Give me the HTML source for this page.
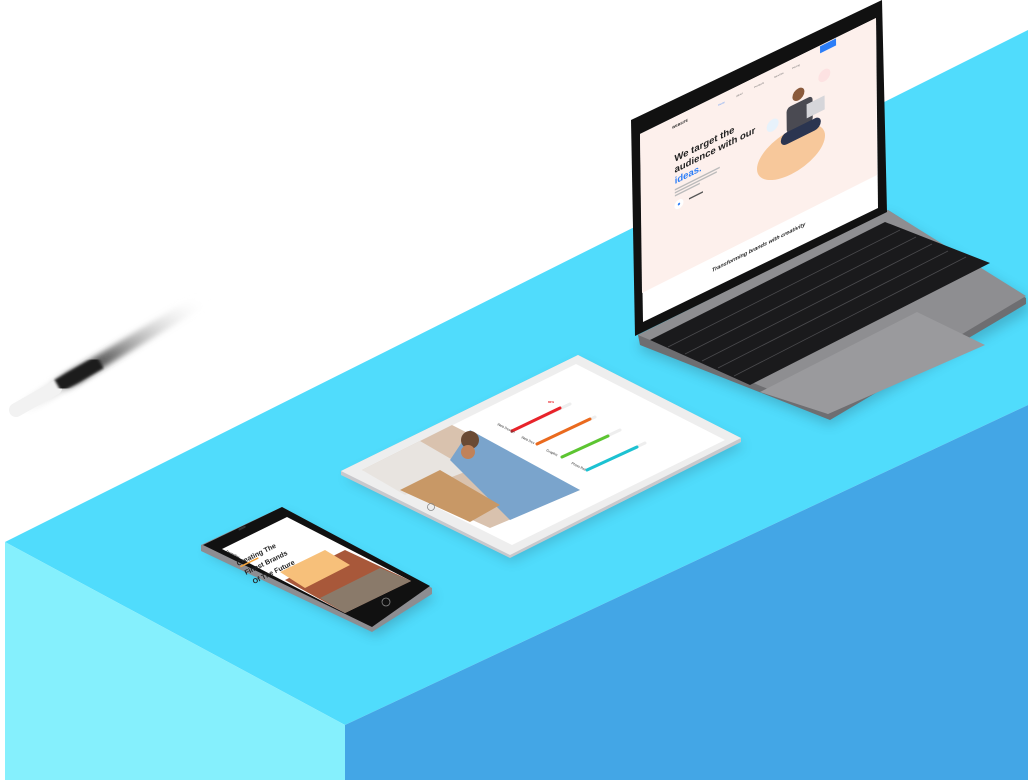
<!DOCTYPE html>
<html><head><meta charset="utf-8"><style>
html,body{margin:0;padding:0;background:#fff;width:1028px;height:780px;overflow:hidden}
svg{display:block}
text{font-family:"Liberation Sans",sans-serif}
</style></head><body>
<svg width="1028" height="780" viewBox="0 0 1028 780" xmlns="http://www.w3.org/2000/svg">
<defs>
<filter id="blur4"><feGaussianBlur stdDeviation="3"/></filter>
<filter id="blur2"><feGaussianBlur stdDeviation="1.2"/></filter>
<filter id="sh"><feGaussianBlur stdDeviation="6"/></filter>
<linearGradient id="pen" x1="0" y1="1" x2="1" y2="0">
<stop offset="0" stop-color="#fff"/><stop offset="0.2" stop-color="#ddd"/><stop offset="0.28" stop-color="#111"/><stop offset="0.5" stop-color="#444" stop-opacity="0.7"/><stop offset="1" stop-color="#fff" stop-opacity="0"/></linearGradient>
</defs>
<!-- block -->
<polygon points="5,542 1028,30 1028,405 345,725" fill="#50dcfc"/>
<polygon points="5,542 345,725 345,780 5,780" fill="#85f0fd"/>
<polygon points="345,725 1028,405 1028,780 345,780" fill="#43a6e6"/>
<!-- pen -->
<g filter="url(#blur4)"><line x1="20" y1="410" x2="205" y2="298" stroke="url(#pen)" stroke-width="14" stroke-linecap="round"/></g>
<line x1="16" y1="410" x2="55" y2="388" stroke="#f2f2f2" stroke-width="14" stroke-linecap="round"/>
<line x1="58" y1="386" x2="100" y2="362" stroke="#1a1a1a" stroke-width="14" filter="url(#blur2)"/>

<!-- laptop -->
<polygon points="640,340 888,214 1028,300 1028,312 830,425 640,350" fill="#1f3b4a" opacity="0.25" filter="url(#sh)"/>
<polygon points="638,335 888,210 1026,298 1026,304 830,420 640,345" fill="#6e6e71"/>
<polygon points="638,335 888,210 1026,296 828,414" fill="#8e8e91"/>
<polygon points="650,340 885,222 990,263 750,385" fill="#1a1a1c"/>
<g stroke="#4a4a4d" stroke-width="0.8">
<line x1="668" y1="347" x2="900" y2="230"/><line x1="685" y1="354" x2="916" y2="237"/><line x1="702" y1="361" x2="932" y2="244"/><line x1="718" y1="368" x2="948" y2="251"/><line x1="734" y1="376" x2="966" y2="257"/>
</g>
<polygon points="760,392 917,312 985,345 828,414" fill="#9a9a9d"/>
<polygon points="631,120 882,0 887,212 635,336" fill="#111"/>
<polygon points="640,134 876,18 878,208 643,322" fill="#fff"/>
<polygon points="640,134 876,18 877,175 642,293" fill="#fdf0ec"/>
<g transform="matrix(1,-0.498,0.011,1,640,135)">
<text x="32" y="10" font-size="3.5" font-weight="bold" fill="#222">WEBSITE</text>
<rect x="180" y="1" width="16" height="7" fill="#2c7ef8"/>
<text x="78" y="10" font-size="2.5" fill="#4a8cf5">Home</text>
<text x="96" y="10" font-size="2.5" fill="#666">About</text>
<text x="114" y="10" font-size="2.5" fill="#666">Products</text>
<text x="134" y="10" font-size="2.5" fill="#666">Services</text>
<text x="152" y="10" font-size="2.5" fill="#666">Pricing</text>
<text x="34" y="44" font-size="9.5" font-weight="bold" fill="#222">We target the</text>
<text x="34" y="55" font-size="9.5" font-weight="bold" fill="#222">audience with our</text>
<text x="34" y="66" font-size="9.5" font-weight="bold" fill="#2c7ef8">ideas.</text>
<rect x="34" y="71" width="45" height="1.5" fill="#bbb"/><rect x="34" y="74" width="42" height="1.5" fill="#bbb"/><rect x="34" y="77" width="25" height="1.5" fill="#bbb"/>
<circle cx="38" cy="88" r="4.5" fill="#fff"/><circle cx="38" cy="88" r="1.2" fill="#2c7ef8"/>
<rect x="48" y="87" width="14" height="1.5" fill="#555"/>
<ellipse cx="150" cy="92" rx="34" ry="22" fill="#f7c89b"/>
<circle cx="158" cy="38" r="6" fill="#8a5a3c"/>
<rect x="146" y="46" width="26" height="26" rx="4" fill="#4a4a52"/>
<rect x="140" y="70" width="40" height="12" rx="6" fill="#2b3550"/>
<rect x="166" y="52" width="18" height="14" fill="#d6d6da"/>
<circle cx="132" cy="56" r="6" fill="#e7f2fb"/><circle cx="184" cy="32" r="6" fill="#fde2e2"/>
<text x="70" y="172" font-size="5.5" font-style="italic" font-weight="bold" fill="#222">Transforming brands with creativity</text>
</g>

<!-- tablet -->
<polygon points="345,478 580,362 745,446 512,562" fill="#1f3b4a" opacity="0.2" filter="url(#sh)"/>
<polygon points="341,471 578,355 741,438 741,442 510,558 341,475" fill="#c8c8cc"/>
<polygon points="341,471 578,355 741,438 510,555" fill="#eeeeee"/>
<polygon points="362,470 576,364 725,440 512,545" fill="#fff"/>
<polygon points="362,470 452,425 580,490 490,528" fill="#d9c2ae"/>
<polygon points="362,470 420,441 470,470 405,495" fill="#e8e4e0"/>
<polygon points="450,460 470,430 580,490 510,520" fill="#7aa4cc"/>
<circle cx="470" cy="440" r="9" fill="#6a4a34"/><circle cx="468" cy="452" r="7" fill="#c0825a"/>
<polygon points="400,490 440,470 500,505 470,522" fill="#c89866"/>
<g stroke-width="3" stroke-linecap="round">
<line x1="512" y1="431" x2="570" y2="404" stroke="#eee"/><line x1="512" y1="431" x2="560" y2="408" stroke="#e8232a"/>
<line x1="537" y1="444" x2="595" y2="417" stroke="#eee"/><line x1="537" y1="444" x2="590" y2="419" stroke="#ea6a1e"/>
<line x1="562" y1="457" x2="620" y2="430" stroke="#eee"/><line x1="562" y1="457" x2="608" y2="436" stroke="#5cc531"/>
<line x1="587" y1="470" x2="645" y2="443" stroke="#eee"/><line x1="587" y1="470" x2="637" y2="447" stroke="#1cc2d2"/>
</g>
<g font-size="3.5" fill="#333">
<text transform="translate(497,425) rotate(26)">Web Design</text>
<text transform="translate(521,438) rotate(26)">Web Dev</text>
<text transform="translate(546,451) rotate(26)">Graphic</text>
<text transform="translate(571,464) rotate(26)">Photo Ret.</text>
</g>
<g font-size="3" fill="#e8232a" font-weight="bold"><text x="548" y="403">80%</text></g>
<circle cx="431" cy="507" r="3.5" fill="none" stroke="#888" stroke-width="0.8"/>

<!-- phone -->
<polygon points="205,552 285,514 436,597 376,636" fill="#1f3b4a" opacity="0.25" filter="url(#sh)"/>
<polygon points="201,545 282,507 432,588 432,594 372,632 201,551" fill="#8d8d91"/>
<polygon points="203,545 282,507 430,586 372,627" fill="#111"/>
<polygon points="222,549 287,517 411,581 345,613" fill="#fff"/>
<polygon points="285,580 345,550 411,581 345,613" fill="#a8583a"/>
<polygon points="280,572 325,550 350,565 305,588" fill="#f7c07a"/>
<polygon points="320,598 380,568 411,581 345,613" fill="#8a7a6a"/>
<g font-family="Liberation Serif" font-weight="bold" fill="#222">
<text font-size="3" transform="translate(226,552) rotate(26)">Donnelina</text>
<text font-size="7" transform="translate(238,566) rotate(-26)">Creating The</text>
<text font-size="7" transform="translate(246,575) rotate(-26)">Finest Brands</text>
<text font-size="7" transform="translate(254,584) rotate(-26)">Of The Future</text>
</g>
<rect x="240" y="566" width="20" height="1.5" fill="#f7a43a" transform="rotate(-26 240 566)"/>
<circle cx="386" cy="602" r="4" fill="none" stroke="#888" stroke-width="0.8"/>
<rect x="238" y="529" width="8" height="2" rx="1" fill="#333" transform="rotate(-26 238 529)"/>
</svg>
</body></html>
